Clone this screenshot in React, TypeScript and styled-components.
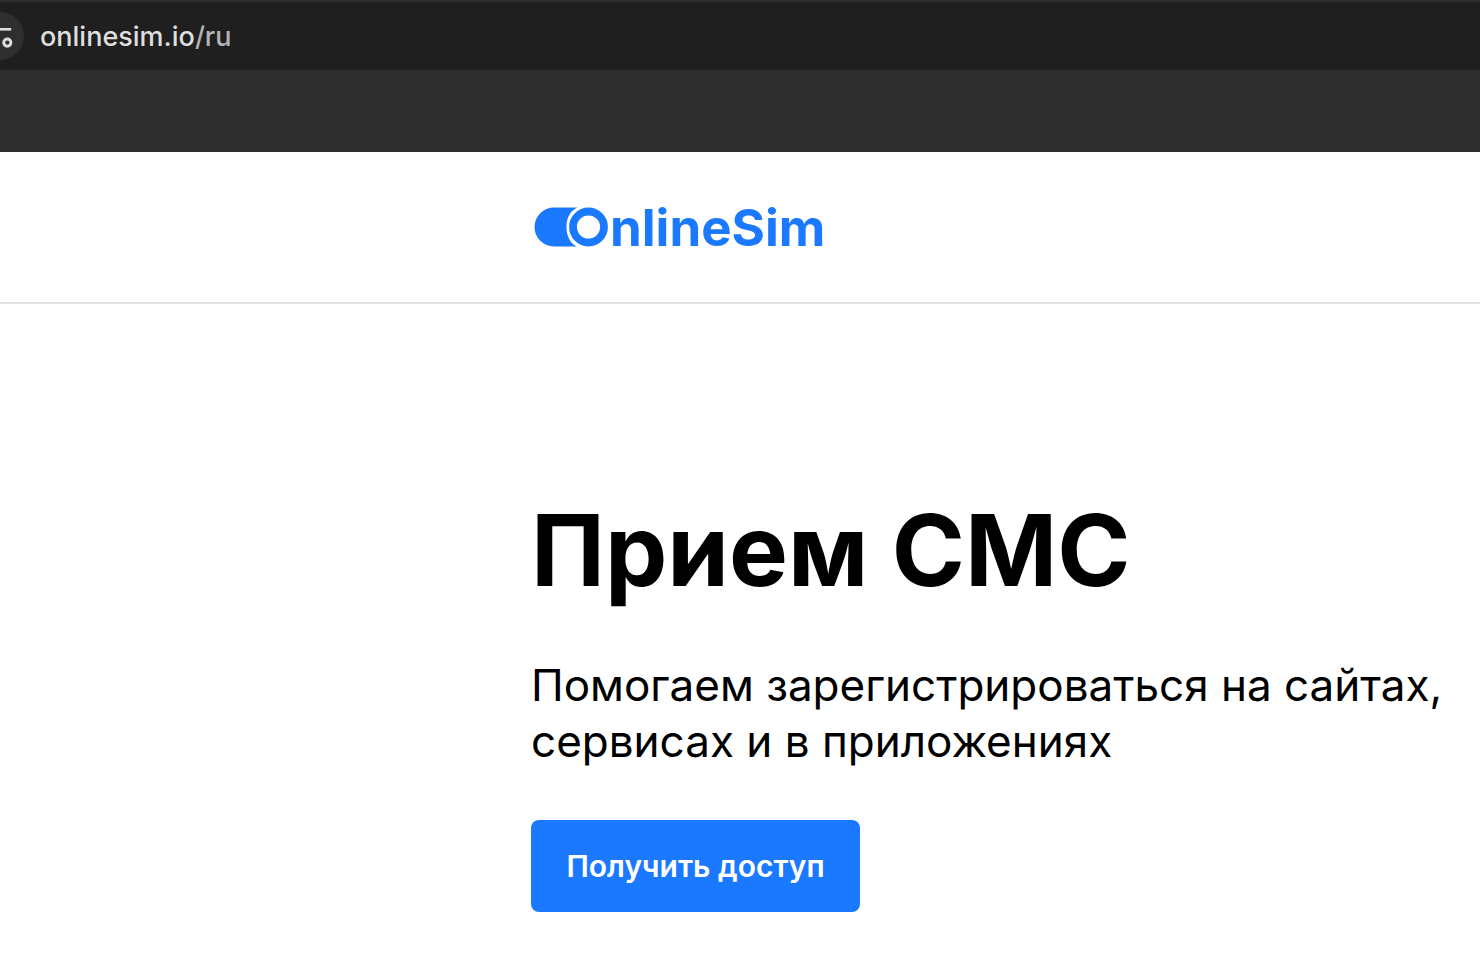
import React from "react";
import styled, { createGlobalStyle } from "styled-components";

const GlobalStyle = createGlobalStyle`
  * { box-sizing: border-box; }
  body {
    margin: 0;
    background: #ffffff;
    color: #000000;
    font-family: Inter, "Noto Sans", sans-serif;
    overflow-x: hidden;
  }
`;

const AddressBar = styled.div`
  display: flex;
  align-items: center;
  gap: 16px;
  height: 70px;
  background: #1f1f1f;
  border-top: 2px solid #2e2e2e;
  overflow: hidden;
`;

const SiteInfoButton = styled.button`
  flex: none;
  width: 48px;
  height: 48px;
  margin-left: -24px;
  padding: 0;
  border: 0;
  border-radius: 50%;
  background: #2f2f2f;

  svg { display: block; }
`;

const Address = styled.div`
  padding-top: 2px;
  color: #dedede;
  font-size: 27px;
  line-height: 32px;
  font-weight: 500;
`;

const AddressPath = styled.span`
  color: #b4b4b4;
`;

const BookmarksBar = styled.div`
  height: 82px;
  background: #2e2e2e;
  border-bottom: 1px solid #343031;
`;

const SiteHeader = styled.header`
  display: flex;
  align-items: center;
  height: 152px;
  padding-left: 534px;
  border-bottom: 2px solid #e0e0e0;
`;

const LogoLink = styled.a`
  display: flex;
  align-items: center;
  gap: 2px;
  color: #1a79ff;
  text-decoration: none;
`;

const LogoName = styled.span`
  padding-top: 2px;
  font-size: 51px;
  line-height: 60px;
  font-weight: 700;
`;

const Hero = styled.main`
  padding: 188px 0 42px 531px;
`;

const Title = styled.h1`
  margin: 0;
  font-size: 99px;
  line-height: 116px;
  font-weight: 700;
`;

const Lead = styled.p`
  margin: 49px 0 51px;
  font-size: 44px;
  line-height: 56px;
  white-space: nowrap;
`;

const AccessButton = styled.button`
  height: 92px;
  min-width: 329px;
  padding: 0 34px;
  border: 0;
  border-radius: 8px;
  background: #1a79ff;
  color: #ffffff;
  font-family: inherit;
  font-size: 30px;
  line-height: 36px;
  font-weight: 600;
`;

function TuneIcon() {
  return (
    <svg width="48" height="48" viewBox="0 0 48 48" fill="none" stroke="#dedede" aria-hidden="true">
      <path d="M23 17.3H35.2" strokeWidth="2.6" />
      <circle cx="31.3" cy="30.6" r="3.6" strokeWidth="2.9" />
      <path d="M13 30.7H23" strokeWidth="2.6" />
      <circle cx="16.7" cy="17.3" r="3.6" strokeWidth="2.9" />
    </svg>
  );
}

function LogoMark() {
  return (
    <svg width="74" height="40" viewBox="0 0 74 40" aria-hidden="true">
      <path d="M20 0.5H43.5C36 4 32.5 11 32.5 20S36 36 42.5 39.5H20A19.5 19.5 0 0 1 20 0.5Z" fill="#1a79ff" />
      <circle cx="54.5" cy="20" r="15.5" fill="#ffffff" stroke="#1a79ff" strokeWidth="7.8" />
    </svg>
  );
}

export default function App() {
  return (
    <>
      <GlobalStyle />
      <AddressBar>
        <SiteInfoButton aria-label="Site information">
          <TuneIcon />
        </SiteInfoButton>
        <Address>
          onlinesim.io<AddressPath>/ru</AddressPath>
        </Address>
      </AddressBar>
      <BookmarksBar />
      <SiteHeader>
        <LogoLink href="/ru">
          <LogoMark />
          <LogoName>nlineSim</LogoName>
        </LogoLink>
      </SiteHeader>
      <Hero>
        <Title>Прием СМС</Title>
        <Lead>
          Помогаем зарегистрироваться на сайтах,
          <br />
          сервисах и в приложениях
        </Lead>
        <AccessButton>Получить доступ</AccessButton>
      </Hero>
    </>
  );
}
